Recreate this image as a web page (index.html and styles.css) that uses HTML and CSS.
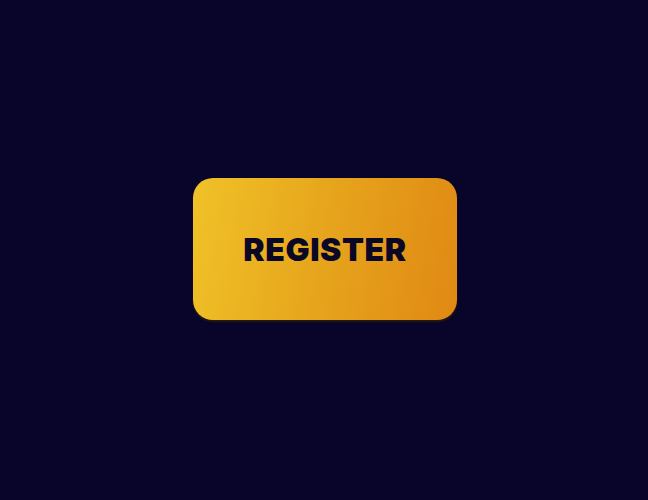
FILE: index.html
```html
<!DOCTYPE html>
<html>
<head>
<meta charset="utf-8">
<link rel="stylesheet" href="styles.css">
</head>
<body>
<main class="stage">
  <button class="register">REGISTER</button>
</main>
</body>
</html>
```
FILE: styles.css
```css
html, body {
  margin: 0;
  padding: 0;
  background: #08042a;
}
.stage {
  width: 648px;
  height: 500px;
  display: flex;
  align-items: center;
  justify-content: center;
}
.register {
  width: 264px;
  height: 142px;
  margin: -2px 0 0 2px;
  border: none;
  border-radius: 20px;
  background: linear-gradient(100deg, #f0c228 0%, #e6a41c 50%, #e08914 100%);
  box-shadow: 0 2px 2px rgba(60, 40, 0, 0.6);
  color: #0b0826;
  font-family: "Inter", "Open Sans", sans-serif;
  font-weight: 900;
  font-size: 32px;
  letter-spacing: 0.6px;
  padding: 0;
  cursor: pointer;
}
```
